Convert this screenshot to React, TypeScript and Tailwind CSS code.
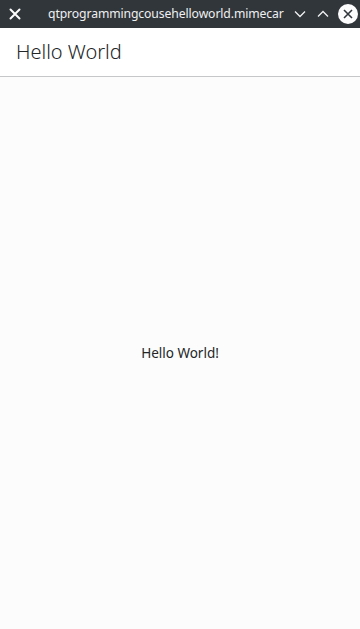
import React from "react";

function TitleBar() {
  return (
    <div className="flex h-[28px] items-center bg-[#31363b] text-white">
      <svg className="ml-[9px] h-[12px] w-[12px]" viewBox="0 0 12 12" fill="none">
        <path d="M1.5 1.5 L10.5 10.5 M10.5 1.5 L1.5 10.5" stroke="#fcfcfc" strokeWidth="2" strokeLinecap="round" />
      </svg>
      <div className="ml-[27px] w-[244px] whitespace-nowrap text-[12.2px] leading-none tracking-[-0.1px] text-[#eff0f1]">
        qtprogrammingcousehelloworld.mimecar
      </div>
      <svg className="ml-[2px] h-[8px] w-[12px]" viewBox="0 0 12 8" fill="none">
        <path d="M1 1.5 L6 6.5 L11 1.5" stroke="#eff0f1" strokeWidth="1.3" />
      </svg>
      <svg className="ml-[11px] h-[8px] w-[12px]" viewBox="0 0 12 8" fill="none">
        <path d="M1 6.5 L6 1.5 L11 6.5" stroke="#eff0f1" strokeWidth="1.3" />
      </svg>
      <svg className="ml-[9px] h-[20px] w-[20px]" viewBox="0 0 20 20">
        <circle cx="10" cy="10" r="10" fill="#fcfcfc" />
        <path d="M6 6 L14 14 M14 6 L6 14" stroke="#31363b" strokeWidth="1.6" />
      </svg>
    </div>
  );
}

export default function App() {
  return (
    <div
      className="flex h-[629px] w-[360px] flex-col bg-[#fcfcfc] text-[#232627]"
      style={{ fontFamily: '"Noto Sans", "Open Sans", sans-serif' }}
    >
      <TitleBar />
      <header className="flex h-[49px] items-center border-b border-[#c6c7c8] bg-white px-[16px]">
        <h1 className="text-[20px] font-light leading-none">Hello World</h1>
      </header>
      <main className="flex flex-1 items-center justify-center pt-[1px]">
        <p className="text-[13.5px]">Hello World!</p>
      </main>
    </div>
  );
}
